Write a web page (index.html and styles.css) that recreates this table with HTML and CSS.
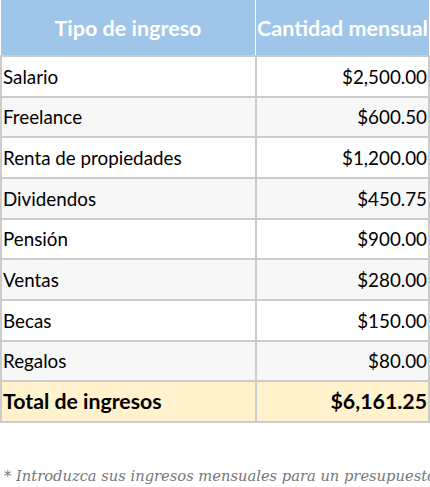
FILE: index.html
```html
<!DOCTYPE html>
<html lang="es">
<head>
<meta charset="utf-8">
<link rel="stylesheet" href="styles.css">
</head>
<body>
<table class="income">
  <thead>
    <tr><th>Tipo de ingreso</th><th>Cantidad mensual</th></tr>
  </thead>
  <tbody>
    <tr><td>Salario</td><td class="num">$2,500.00</td></tr>
    <tr class="alt"><td>Freelance</td><td class="num">$600.50</td></tr>
    <tr><td>Renta de propiedades</td><td class="num">$1,200.00</td></tr>
    <tr class="alt"><td>Dividendos</td><td class="num">$450.75</td></tr>
    <tr><td>Pensión</td><td class="num">$900.00</td></tr>
    <tr class="alt"><td>Ventas</td><td class="num">$280.00</td></tr>
    <tr><td>Becas</td><td class="num">$150.00</td></tr>
    <tr class="alt"><td>Regalos</td><td class="num">$80.00</td></tr>
    <tr class="total"><td>Total de ingresos</td><td class="num">$6,161.25</td></tr>
  </tbody>
</table>
<p class="note">* Introduzca sus ingresos mensuales para un presupuesto preciso.</p>
</body>
</html>
```
FILE: styles.css
```css
html, body {
  margin: 0;
  padding: 0;
  background: #fff;
  overflow: hidden;
}
body {
  width: 430px;
  font-family: Lato, "Liberation Sans", sans-serif;
  color: #000;
}
.income {
  border-collapse: collapse;
  width: 430px;
  font-size: 18.8px;
  table-layout: fixed;
}
.income th {
  background: #9fc5e8;
  color: #fff;
  font-weight: 700;
  font-size: 21.5px;
  height: 55px;
  padding: 0;
  border: 1px solid #fff;
  border-top: none;
  text-align: center;
  white-space: nowrap;
  overflow: hidden;
}
.income th:first-child { width: 254px; border-left: none; }
.income th:last-child { border-right: none; }
.income td {
  border: 2px solid #ccc;
  padding: 8.5px 1px;
  line-height: 21.67px;
  white-space: nowrap;
}
.income .alt td { background: #f7f7f7; }
.income .num { text-align: right; }
.income .total td {
  background: #fff2cc;
  font-weight: 700;
  font-size: 21.3px;
}
.note {
  margin: 44px 0 0 4px;
  font-family: "DejaVu Serif", "Liberation Serif", serif;
  font-style: italic;
  font-size: 14.7px;
  color: #777;
  white-space: nowrap;
}
```
